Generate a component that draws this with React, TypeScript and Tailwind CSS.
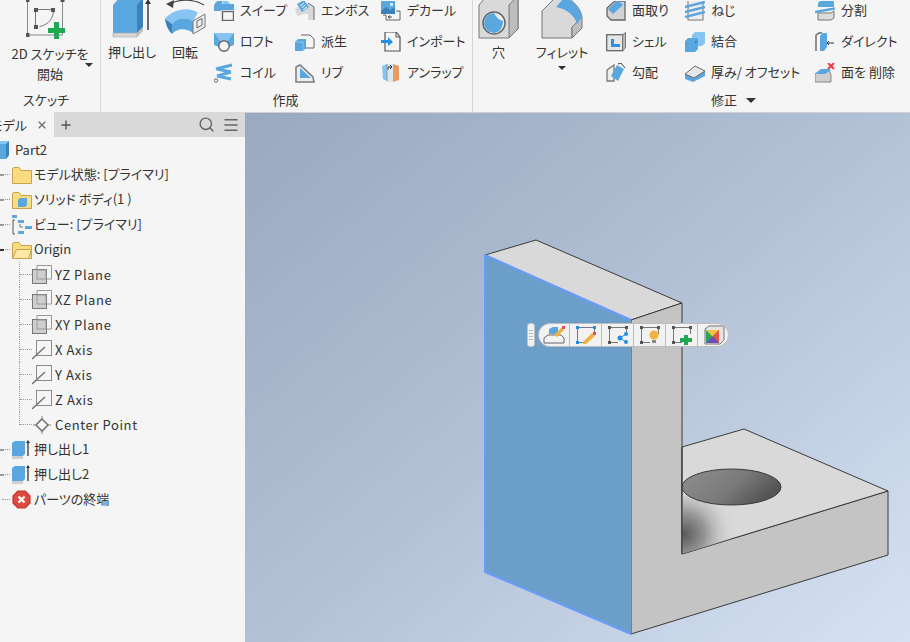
import { Menu, Plus, Search, X } from 'lucide-react'
import type { ReactNode } from 'react'

const BLUE = '#5aa7e0'
const LIGHT = '#86c5f2'
const DARK = '#3b82bd'

function Svg({ w = 20, h = 20, children }: { w?: number; h?: number; children: ReactNode }) {
  return (
    <svg width={w} height={h} viewBox={`0 0 ${w} ${h}`} className="shrink-0">
      {children}
    </svg>
  )
}

/* ribbon: large tools */
const SketchIcon = () => (
  <Svg w={42} h={40}>
    <rect x="1.5" y="-1" width="35" height="36" fill="none" stroke="#8a8a8a" strokeWidth="1" />
    <path d="M9.5 10V26" stroke="#777" />
    <path d="M9 9.5H27" stroke="#777" />
    <path d="M27.5 10c0 8-5 15-14 16.500" fill="none" stroke="#777" />
    <rect x="-0.500" y="-2" width="4" height="4" fill="#555" />
    <rect x="34.500" y="-2" width="4" height="4" fill="#555" />
    <rect x="-0.500" y="33" width="4" height="4" fill="#555" />
    <rect x="8" y="25" width="4" height="4" fill="#555" />
    <rect x="8" y="8" width="4" height="4" fill="#555" />
    <rect x="25" y="8" width="4" height="4" fill="#555" />
    <path d="M28 22h5v6h6v5h-6v6h-5v-6h-6v-5h6z" fill="#22a84f" />
  </Svg>
)
const ExtrudeIcon = () => (
  <Svg w={42} h={40}>
    <path d="M2 5 10-4H32V27L26 33H2Z" fill={BLUE} />
    <path d="M26 5 32-2V27L26 33Z" fill={DARK} />
    <path d="M2 33H26V37H2Z" fill="#d8d8d8" stroke="#aaa" strokeWidth=".6" />
    <path d="M26 33 32 27V31L26 37Z" fill="#bcbcbc" />
    <path d="M37 30V1" stroke="#333" strokeWidth="1.4" />
    <path d="M34 4 37-1 40 4Z" fill="#333" />
  </Svg>
)
const RevolveIcon = () => (
  <Svg w={42} h={36}>
    <path d="M8 3C16-1 30-1 40 5" fill="none" stroke="#444" strokeWidth="1.200" />
    <path d="M2 4 10 0 9 8Z" fill="#444" />
    <path d="M1 19C8 9 26 6 34 13L29 21C22 17 13 18 8 24Z" fill={LIGHT} />
    <path d="M1 19 8 24C13 18 22 17 29 21V33C22 28 14 28 8 34 4 30 2 25 1 19Z" fill={BLUE} />
    <path d="M1 19 8 24V34C4 30 2 25 1 19Z" fill={DARK} />
    <path d="M29 21 41 14V27L29 34Z" fill="#eee" stroke="#777" />
    <path d="M33 21 38 18.500V25L33 28Z" fill="none" stroke="#666" />
  </Svg>
)
const HoleIcon = () => (
  <Svg w={42} h={40}>
    <path d="M1 5 8-3H40V29L31 38H1Z" fill="#d9d9d9" stroke="#777" />
    <path d="M31 5 40-4V29L31 38Z" fill="#bdbdbd" stroke="#777" />
    <circle cx="16" cy="23" r="11" fill="#efefef" stroke="#666" strokeWidth="1.500" />
    <path d="M6 23a10 10 0 0 1 10-10c2 4 5 7 9 8 0 7-4 12-9 12A10 10 0 0 1 6 23Z" fill={BLUE} />
  </Svg>
)
const FilletIcon = () => (
  <Svg w={42} h={40}>
    <path d="M1 11 14-2H28C35 4 40 10 41 17L31 27V38H1Z" fill="#d9d9d9" stroke="#777" />
    <path d="M31 38V27L41 17V28Z" fill="#bdbdbd" stroke="#777" />
    <path d="M15 7 22-1H28C35 4 40 10 41 17L36 24C33 15 26 9 15 7Z" fill={BLUE} />
  </Svg>
)

/* ribbon: small tools */
const SweepIcon = () => (
  <Svg>
    <path d="M0 6C0 1 4-1 8-1V3H20V9H9L6 10H0Z" fill={BLUE} />
    <path d="M8-1C12-1 15 0 16 3H9Z" fill={LIGHT} />
    <rect x="8.500" y="10.500" width="11" height="9" fill="#f5f5f5" stroke="#666" strokeWidth="1.400" />
  </Svg>
)
const LoftIcon = () => (
  <Svg>
    <path d="M0 1H20V13L15 15H5L0 13Z" fill={BLUE} />
    <path d="M0 1H20L14 9H6Z" fill={LIGHT} />
    <circle cx="10" cy="14" r="5.200" fill="#f5f5f5" stroke="#666" strokeWidth="1.400" />
  </Svg>
)
const CoilIcon = () => (
  <Svg>
    <path d="M2 6 18 2M3 6 17 9M17 9 3 13M3 13 17 16" stroke={BLUE} strokeWidth="3" fill="none" />
    <circle cx="2" cy="17.500" r="1.700" fill="#f5f5f5" stroke="#666" />
  </Svg>
)
const EmbossIcon = () => (
  <Svg>
    <path d="M0 9C4 2 13 0 19 6V19H13V13C9 12 5 14 3 16Z" fill="#d8d8d8" />
    <path d="M13 2 19 6V19" fill="none" stroke="#666" />
    <path d="M2 3 9-1 14 6 7 11Z" fill={BLUE} />
    <path d="M5 5 9 2M6.500 7 10.500 4M8 9 12 6" stroke="#f5f5f5" />
  </Svg>
)
const DeriveIcon = () => (
  <Svg>
    <path d="M6 3H15L19 7V16H10" fill="#f5f5f5" stroke="#666" />
    <path d="M0 10 3 7H11V16L8 19H0Z" fill={BLUE} />
    <path d="M0 10H8V19" fill="none" stroke={LIGHT} />
  </Svg>
)
const RibIcon = () => (
  <Svg>
    <path d="M1 19V4L5 2 18 14 19 19Z" fill="#ededed" stroke="#7a7a7a" strokeWidth="1.500" />
    <path d="M5 5 16 15H5Z" fill={BLUE} />
  </Svg>
)
const DecalIcon = () => (
  <Svg>
    <path d="M2 14H5V19H19V10H15" fill="none" stroke="#666" />
    <rect x="0" y="0" width="14" height="13" fill={BLUE} />
    <path d="M0 10 5 6 9 9 14 6V13H0Z" fill={DARK} />
    <rect x="9" y="2" width="3" height="3" fill="#cfe8fb" />
    <path d="M7 16H11M7 16 9 14.500M7 16 9 17.500" stroke="#444" />
  </Svg>
)
const ImportIcon = () => (
  <Svg>
    <path d="M4 0H15L19 5V19H4Z" fill="#f5f5f5" stroke="#555" strokeWidth="1.200" />
    <path d="M15 0V5H19" fill="none" stroke="#555" />
    <path d="M0 8H7V5L12 10 7 14V11H0Z" fill="#1e90e6" />
  </Svg>
)
const UnwrapIcon = () => (
  <Svg>
    <path d="M1 3 6 1V18L2 16Z" fill={LIGHT} />
    <path d="M6 1H12V19H6Z" fill="#dfe7ee" />
    <path d="M12 1 18 3V17L12 19Z" fill="#e79a63" />
    <path d="M7 7V4H11M9 2 11 4 9 6" fill="none" stroke="#333" />
    <path d="M6 1V18" stroke="#8899aa" />
  </Svg>
)
const ChamferIcon = () => (
  <Svg>
    <path d="M1 7 9 0H19V19H5L1 15Z" fill="#d2d2d2" stroke="#666" strokeWidth="1.300" />
    <path d="M2 8 12-1 17 4 7 13Z" fill={BLUE} />
  </Svg>
)
const ShellIcon = () => (
  <Svg>
    <rect x=".7" y="2.700" width="16" height="16" fill="#e6e6e6" stroke="#666" strokeWidth="1.300" />
    <path d="M16.700 2.700 19.500.5V16L16.700 18.700Z" fill="#bdbdbd" stroke="#777" />
    <path d="M5 7H8V12H14V15H5Z" fill="#2d90e0" />
  </Svg>
)
const DraftIcon = () => (
  <Svg>
    <path d="M1 7 8 2V18H1Z" fill="#ededed" stroke="#7a7a7a" strokeWidth="1.300" />
    <path d="M5 13 11 2 18 6 12 18Z" fill={BLUE} />
    <path d="M12 1 15 0 19 5" fill="none" stroke="#444" />
  </Svg>
)
const ThreadIcon = () => (
  <Svg>
    <rect x="3" y="-1" width="15" height="20" fill="#ededed" stroke="#777" />
    <path d="M0 6 20 1M0 11 20 6M0 16 20 11" stroke={BLUE} strokeWidth="2.600" />
  </Svg>
)
const CombineIcon = () => (
  <Svg>
    <path d="M7 3 10 0H20V11L17 14H7Z" fill={LIGHT} />
    <path d="M0 9 3 6H13V17L10 20H0Z" fill={BLUE} />
    <path d="M10 9H13L10 12Z" fill={DARK} />
  </Svg>
)
const ThickenIcon = () => (
  <Svg>
    <path d="M0 12 10 4 20 9V13L8 19 0 16Z" fill={BLUE} />
    <path d="M0 11 10 3 20 8 9 15Z" fill="#e6e6e6" stroke="#666" />
  </Svg>
)
const SplitIcon = () => (
  <Svg>
    <path d="M3 2 6-1H19V6H3Z" fill={BLUE} />
    <path d="M0 11 20 7.500" stroke={BLUE} strokeWidth="2.500" />
    <path d="M3 12H16L19 10V17L16 19H3Z" fill="#dcdcdc" stroke="#777" />
  </Svg>
)
const DirectIcon = () => (
  <Svg>
    <path d="M1 19V3L4 1H7" fill="none" stroke="#666" strokeWidth="1.400" />
    <path d="M5 4 8 1H12V15L9 19H5Z" fill={BLUE} />
    <path d="M13 11H19M14 9 12 11 14 13" stroke="#333" fill="none" />
  </Svg>
)
const DeleteFaceIcon = () => (
  <Svg>
    <path d="M0 11 6 7H14L16 12V19H0Z" fill="#cfcfcf" stroke="#888" />
    <path d="M0 11H10L16 7 14 6H6Z" fill={BLUE} />
    <path d="M13 0 19 6M19 0 13 6" stroke="#ef3b44" strokeWidth="2" />
  </Svg>
)

/* tree icons */
const CubeIcon = () => (
  <Svg w={15} h={20}>
    <path d="M1 4 4 1H14V15L11 19H1Z" fill={BLUE} />
    <path d="M11 4 14 1V15L11 19Z" fill={DARK} />
    <path d="M1 4 4 1H14L11 4Z" fill={LIGHT} />
  </Svg>
)
const Folder = ({ children, open }: { children?: ReactNode; open?: boolean }) => (
  <Svg>
    <path d="M.5 3.500V18.500H19.500V5.500H9L7 2.500H2Z" fill="#f9dc7f" stroke="#c9a24d" />
    {open && <path d="M.5 18.500 4.500 9.500H19.500L16.500 18.500Z" fill="#fbe8a6" stroke="#c9a24d" />}
    {children}
  </Svg>
)
const ViewIcon = () => (
  <Svg>
    <rect x="0" y="0" width="5" height="3" fill={BLUE} />
    <path d="M3 5H1V19H3" fill="none" stroke="#555" />
    <rect x="6" y="5" width="6" height="3" fill={BLUE} />
    <rect x="13" y="11" width="7" height="3" fill={BLUE} />
    <rect x="6" y="16" width="6" height="3" fill={BLUE} />
    <path d="M8 9V12H11" fill="none" stroke="#777" />
  </Svg>
)
const PlaneIcon = () => (
  <Svg>
    <path d="M5 4V.5H19.500V14H15" fill="none" stroke="#999" />
    <rect x=".5" y="4.500" width="14" height="14" fill="#cfcfcf" stroke="#777" />
    <rect x="5" y="5" width="9" height="9" fill="none" stroke="#999" />
  </Svg>
)
const AxisIcon = () => (
  <Svg>
    <rect x="4.500" y=".5" width="15" height="15" fill="#f5f5f5" stroke="#8c8c8c" />
    <path d="M0 19 13 7" stroke="#777" strokeWidth="1.600" />
  </Svg>
)
const PointIcon = () => (
  <Svg>
    <path d="M10 4 16 10 10 16 4 10Z" fill="#f5f5f5" stroke="#777" strokeWidth="1.600" />
    <path d="M10 1V4M10 16V19M1 10H4M16 10H19" stroke="#888" />
  </Svg>
)
const FeatureIcon = () => (
  <Svg>
    <path d="M0 3 3 1H13V14L11 16H0Z" fill={BLUE} />
    <path d="M0 16H11V19H0Z" fill="#cfcfcf" />
    <path d="M16 16V2" stroke="#333" strokeWidth="1.300" />
    <path d="M14 3 16 0 18 3Z" fill="#333" />
  </Svg>
)
const EndIcon = () => (
  <Svg>
    <path d="M6 1H13L18 6V13L13 18H6L1 13V6Z" fill="#dd4a42" stroke="#c7362f" strokeWidth="1.200" strokeLinejoin="round" />
    <path d="M6.500 6.500 12.500 12.500M12.500 6.500 6.500 12.500" stroke="#fff" strokeWidth="2.400" />
  </Svg>
)

/* floating toolbar icons */
const Handle = ({ color = '#555' }: { color?: string }) => (
  <>
    <rect x="2" y="1" width="3" height="3" fill={color} />
    <rect x="19" y="1" width="3" height="3" fill={color} />
    <rect x="2" y="16" width="3" height="3" fill={color} />
    <path d="M5 2.500H19M3.500 4V16M20.500 4V9M5 17.500H12" stroke="#777" fill="none" />
  </>
)
const MiniToolbar = [
  <Svg w={24} key="a">
    <path d="M2 13 6 10H19L22 13V18H2Z" fill="#f2f2f2" stroke="#666" />
    <path d="M7 4 11 2H16V9H7Z" fill={BLUE} />
    <path d="M12 10 19 3 22 5 15 12Z" fill="#f3b23f" />
    <rect x="20" y="1" width="3" height="3" fill="#ef4a4a" />
  </Svg>,
  <Svg w={24} key="b">
    <Handle color="#1c8fe8" />
    <path d="M9 17 18 8 21 11 12 19H9Z" fill="#f3b23f" />
    <rect x="19" y="7" width="3" height="3" fill="#ef4a4a" />
  </Svg>,
  <Svg w={24} key="c">
    <Handle />
    <circle cx="14" cy="13" r="2.500" fill="#1c8fe8" />
    <circle cx="20" cy="9" r="2" fill="#1c8fe8" />
    <circle cx="20" cy="17" r="2" fill="#1c8fe8" />
    <path d="M14 13 20 9M14 13 20 17" stroke="#1c8fe8" />
  </Svg>,
  <Svg w={24} key="d">
    <Handle />
    <circle cx="16" cy="10" r="4.500" fill="#f3b23f" />
    <rect x="14" y="15" width="4" height="3" fill="#888" />
  </Svg>,
  <Svg w={24} key="e">
    <Handle />
    <path d="M14 10H18V13H22V17H18V20H14V17H10V13H14Z" fill="#22a84f" />
  </Svg>,
  <Svg w={24} key="f">
    <path d="M3 4 7 1H22V15L18 19H3Z" fill="#e4e4e4" stroke="#777" />
    <path d="M4 5H17V18H4Z" fill="#2aa65a" />
    <path d="M4 5H17L10.500 11.500Z" fill="#f3c33c" />
    <path d="M17 5V18L10.500 11.500Z" fill="#e0544a" />
    <path d="M4 18H17L10.500 11.500Z" fill="#6e4bb8" />
  </Svg>,
]

function Tool({ icon, label }: { icon: ReactNode; label: string }) {
  return (
    <div className="flex h-[31px] items-center gap-[6px] whitespace-nowrap">
      {icon}
      <span className="-mt-[2px]">{label}</span>
    </div>
  )
}

function ToolColumn({ width, tools }: { width: string; tools: [ReactNode, string][] }) {
  return (
    <div className={`-mt-[5px] flex shrink-0 flex-col ${width}`}>
      {tools.map(([icon, label]) => (
        <Tool key={label} icon={icon} label={label} />
      ))}
    </div>
  )
}

function LargeTool({ icon, label, className }: { icon: ReactNode; label: ReactNode; className: string }) {
  return (
    <div className={`flex shrink-0 flex-col items-center whitespace-nowrap text-center ${className}`}>
      <div className="flex h-[42px] items-start justify-center">{icon}</div>
      <div className="leading-5">{label}</div>
    </div>
  )
}

function PanelTitle({ children }: { children: ReactNode }) {
  return <div className="-mt-[1px] flex h-[22px] items-center justify-center">{children}</div>
}

const Caret = () => <span className="inline-block border-x-[4px] border-t-[4px] border-x-transparent border-t-[#333]" />

function Ribbon() {
  return (
    <div className="flex h-[112px] shrink-0 overflow-hidden bg-[#f5f5f5]">
      <div className="flex w-[101px] shrink-0 flex-col border-r border-[#d6d6d6]">
        <div className="relative h-[90px] overflow-hidden pl-[26px]">
          <SketchIcon />
          <div className="-ml-[26px] mt-[4px] text-center leading-5">
            2D スケッチを
            <br />
            開始
          </div>
          <span className="absolute left-[85px] top-[63px] flex">
            <Caret />
          </span>
        </div>
        <PanelTitle>
          <span className="-ml-[8px]">スケッチ</span>
        </PanelTitle>
      </div>

      <div className="flex w-[372px] shrink-0 flex-col border-r border-[#d6d6d6]">
        <div className="flex h-[90px] overflow-hidden pl-[6px]">
          <LargeTool className="w-[50px]" icon={<ExtrudeIcon />} label="押し出し" />
          <LargeTool className="ml-[8px] w-[40px]" icon={<RevolveIcon />} label="回転" />
          <ToolColumn
            width="ml-[9px] w-[81px]"
            tools={[
              [<SweepIcon />, 'スイープ'],
              [<LoftIcon />, 'ロフト'],
              [<CoilIcon />, 'コイル'],
            ]}
          />
          <ToolColumn
            width="w-[86px]"
            tools={[
              [<EmbossIcon />, 'エンボス'],
              [<DeriveIcon />, '派生'],
              [<RibIcon />, 'リブ'],
            ]}
          />
          <ToolColumn
            width="w-[90px]"
            tools={[
              [<DecalIcon />, 'デカール'],
              [<ImportIcon />, 'インポート'],
              [<UnwrapIcon />, 'アンラップ'],
            ]}
          />
        </div>
        <PanelTitle>
          <span className="-ml-[2px]">作成</span>
        </PanelTitle>
      </div>

      <div className="flex flex-1 flex-col">
        <div className="flex h-[90px] overflow-hidden pl-[5px]">
          <LargeTool className="w-[41px]" icon={<HoleIcon />} label="穴" />
          <LargeTool
            className="ml-[18px] w-[50px]"
            icon={<FilletIcon />}
            label={
              <>
                フィレット
                <div className="mt-[4px] flex justify-center">
                  <Caret />
                </div>
              </>
            }
          />
          <ToolColumn
            width="ml-[19px] w-[79px]"
            tools={[
              [<ChamferIcon />, '面取り'],
              [<ShellIcon />, 'シェル'],
              [<DraftIcon />, '勾配'],
            ]}
          />
          <ToolColumn
            width="w-[130px]"
            tools={[
              [<ThreadIcon />, 'ねじ'],
              [<CombineIcon />, '結合'],
              [<ThickenIcon />, '厚み/ オフセット'],
            ]}
          />
          <ToolColumn
            width="w-[90px]"
            tools={[
              [<SplitIcon />, '分割'],
              [<DirectIcon />, 'ダイレクト'],
              [<DeleteFaceIcon />, '面を 削除'],
            ]}
          />
        </div>
        <PanelTitle>
          <span className="flex translate-x-[42px] items-center gap-[9px]">
            修正
            <span className="border-x-[5px] border-t-[5px] border-x-transparent border-t-[#333]" />
          </span>
        </PanelTitle>
      </div>
    </div>
  )
}

function Expander({ open }: { open?: boolean }) {
  return (
    <span className="flex w-[10px] shrink-0 items-center">
      <span className={`h-[2px] w-[4px] ${open ? 'bg-[#333]' : 'bg-[#999]'}`} />
      <span className="ml-px w-[5px] border-t border-dotted border-[#999]" />
    </span>
  )
}

function TopRow({ icon, label, open, noToggle }: { icon: ReactNode; label: string; open?: boolean; noToggle?: boolean }) {
  return (
    <div className="flex h-[25px] items-center whitespace-nowrap">
      {noToggle ? (
        <span className="ml-[2px] w-[8px] shrink-0 border-t border-dotted border-[#999]" />
      ) : (
        <Expander open={open} />
      )}
      <span className="ml-[2px] flex">{icon}</span>
      <span className="-mt-[2px] ml-[2px]">{label}</span>
    </div>
  )
}

function ChildRow({ icon, label, last }: { icon: ReactNode; label: string; last?: boolean }) {
  return (
    <div className="flex h-[25px] items-center whitespace-nowrap pl-[19px]">
      <span className={`w-px shrink-0 self-start border-l border-dotted border-[#999] ${last ? 'h-[13px]' : 'h-[25px]'}`} />
      <span className="w-[12px] shrink-0 border-t border-dotted border-[#999]" />
      {icon}
      <span className="ml-[3px] tracking-[0.6px]">{label}</span>
    </div>
  )
}

function ModelBrowser() {
  return (
    <div className="flex w-[245px] shrink-0 flex-col overflow-hidden bg-[#f5f5f5]">
      <div className="flex h-[25px] shrink-0 items-center bg-[#d9d9d9]">
        <div className="flex h-full w-[54px] items-center justify-end gap-[9px] overflow-hidden bg-[#f5f5f5] pr-[6px]">
          <span className="whitespace-nowrap">モデル</span>
          <X size={12} strokeWidth={2.2} className="shrink-0 text-[#666]" />
        </div>
        <Plus size={14} strokeWidth={2.4} className="ml-[5px] text-[#555]" />
        <Search size={17} strokeWidth={2} className="ml-auto text-[#666]" />
        <Menu size={18} strokeWidth={2} className="ml-[7px] mr-[5px] text-[#666]" />
      </div>

      <div className="-ml-[5px] flex h-[25px] items-center gap-[5px]">
        <CubeIcon />
        <span>Part2</span>
      </div>
      <TopRow icon={<Folder />} label="モデル状態: [プライマリ]" />
      <TopRow
        icon={
          <Folder>
            <path d="M6 10 8 8H15V15L13 17H6Z" fill={BLUE} />
          </Folder>
        }
        label="ソリッド ボディ(1 )"
      />
      <TopRow icon={<ViewIcon />} label="ビュー: [プライマリ]" />
      <TopRow icon={<Folder open />} label="Origin" open />
      <ChildRow icon={<PlaneIcon />} label="YZ Plane" />
      <ChildRow icon={<PlaneIcon />} label="XZ Plane" />
      <ChildRow icon={<PlaneIcon />} label="XY Plane" />
      <ChildRow icon={<AxisIcon />} label="X Axis" />
      <ChildRow icon={<AxisIcon />} label="Y Axis" />
      <ChildRow icon={<AxisIcon />} label="Z Axis" />
      <ChildRow icon={<PointIcon />} label="Center Point" last />
      <TopRow icon={<FeatureIcon />} label="押し出し1" />
      <TopRow icon={<FeatureIcon />} label="押し出し2" />
      <TopRow icon={<EndIcon />} label="パーツの終端" noToggle />
    </div>
  )
}

function Model() {
  const edge = '#3a3a3a'
  return (
    <svg viewBox="245 113 665 529" className="absolute inset-0 h-full w-full">
      <defs>
        <radialGradient id="contact" gradientUnits="userSpaceOnUse" cx="684" cy="534" r="52">
          <stop offset="0" stopColor="#5a5a5a" />
          <stop offset=".4" stopColor="#959595" />
          <stop offset="1" stopColor="#d8d8d8" stopOpacity="0" />
        </radialGradient>
        <linearGradient id="hole" x1="0" y1="0" x2="1" y2=".4">
          <stop offset="0" stopColor="#8f8f8f" />
          <stop offset=".6" stopColor="#7a7a7a" />
          <stop offset="1" stopColor="#555" />
        </linearGradient>
        <clipPath id="baseTop">
          <path d="M682 447 744 429 888 491 682 554Z" />
        </clipPath>
      </defs>
      <path d="M485 255 536 240 682 303 631 320Z" fill="#d9d9d9" stroke={edge} />
      <path d="M631 320 682 303V554L888 491V555L631 634Z" fill="#c4c4c4" stroke={edge} />
      <path d="M682 447 744 429 888 491 682 554Z" fill="#d9d9d9" stroke={edge} />
      <g clipPath="url(#baseTop)">
        <ellipse cx="684" cy="534" rx="62" ry="38" fill="url(#contact)" />
      </g>
      <ellipse cx="731.500" cy="487" rx="49.500" ry="18" fill="url(#hole)" stroke={edge} />
      <path d="M682 447V554" stroke={edge} />
      <path d="M485 255 631 320V634L485 572Z" fill="#6b9fc9" />
      <path d="M631 320 485 255V572L631 634" fill="none" stroke="#6a9bff" strokeWidth="2" />
    </svg>
  )
}

function Viewport() {
  return (
    <div className="relative flex-1 overflow-hidden border-t border-[#d0d0d0] bg-[linear-gradient(140deg,#9aa8c0_0%,#b3c1d6_50%,#d6e2f3_100%)]">
      <Model />
      <div className="absolute left-[282px] top-[210px] flex items-center gap-[3px]">
        <div className="flex h-[24px] w-[8px] flex-col items-center justify-center gap-[2px] rounded-[3px] border border-[#c4c4c4] bg-[#f2f2f2]">
          <span className="h-px w-[4px] bg-[#bbb]" />
          <span className="h-px w-[4px] bg-[#bbb]" />
          <span className="h-px w-[4px] bg-[#bbb]" />
          <span className="h-px w-[4px] bg-[#bbb]" />
        </div>
        <div className="flex h-[24px] w-[191px] items-center divide-x divide-[#bdbdbd] overflow-hidden rounded-full border border-[#bdbdbd] bg-[#f2f2f2]">
          {MiniToolbar.map((icon, i) => (
            <div key={i} className={`flex h-full shrink-0 items-center justify-center ${i === 0 ? 'w-[31px]' : 'w-[32px]'}`}>
              {icon}
            </div>
          ))}
        </div>
      </div>
    </div>
  )
}

export default function App() {
  return (
    <div className="flex h-[642px] w-[910px] flex-col overflow-hidden bg-[#f5f5f5] font-['Noto_Sans_CJK_JP','Noto_Sans',sans-serif] text-[13px] text-[#333] [font-feature-settings:'palt']">
      <Ribbon />
      <div className="flex min-h-0 flex-1">
        <ModelBrowser />
        <Viewport />
      </div>
    </div>
  )
}
